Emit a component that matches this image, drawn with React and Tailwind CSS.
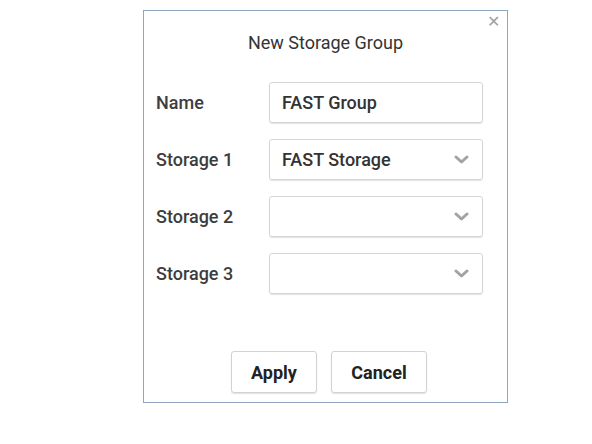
const Chevron = () => (
  <svg width="15" height="9" viewBox="0 0 15 9" className="shrink-0">
    <path d="M2 2 L7.5 7 L13 2" fill="none" stroke="#a3a3a3" strokeWidth="3" strokeLinecap="round" strokeLinejoin="round" />
  </svg>
);

const Field = ({ label, value, select }) => (
  <div className="flex h-[41px] items-center">
    <div className="w-[125px] pl-[12px] text-[18px] font-medium text-[#3d3d3d]">{label}</div>
    <div className="flex h-full w-[214px] items-center justify-between rounded-[3px] border border-[#d6d6d6] pl-[12px] pr-[13px] shadow-[0_1px_1px_rgba(0,0,0,0.12)]">
      <span className="text-[18px] font-medium text-[#333]">{value}</span>
      {select && <Chevron />}
    </div>
  </div>
);

export default function App() {
  return (
    <div className="h-[444px] w-[592px] bg-white pt-[10px] pl-[143px]" style={{ fontFamily: "Roboto, 'Liberation Sans', sans-serif" }}>
      <div className="relative flex h-[393px] w-[365px] flex-col border border-[#8ea6bf] bg-white">
        <button className="absolute right-[7px] top-[3px] text-[16px] leading-none text-[#a0a0a0]">✕</button>
        <div className="mt-[21px] h-[22px] text-center text-[18px] leading-[22px] text-[#333]">New Storage Group</div>
        <div className="mt-[28px] flex flex-col gap-[16px]">
          <Field label="Name" value="FAST Group" />
          <Field label="Storage 1" value="FAST Storage" select />
          <Field label="Storage 2" value="" select />
          <Field label="Storage 3" value="" select />
        </div>
        <div className="mt-[57px] flex gap-[14px] pl-[87px]">
          <button className="h-[42px] w-[86px] rounded-[3px] border border-[#d2d2d2] text-[18px] font-bold text-[#222] shadow-[0_1px_1px_rgba(0,0,0,0.12)]">Apply</button>
          <button className="h-[42px] w-[96px] rounded-[3px] border border-[#d2d2d2] text-[18px] font-bold text-[#222] shadow-[0_1px_1px_rgba(0,0,0,0.12)]">Cancel</button>
        </div>
      </div>
    </div>
  );
}
